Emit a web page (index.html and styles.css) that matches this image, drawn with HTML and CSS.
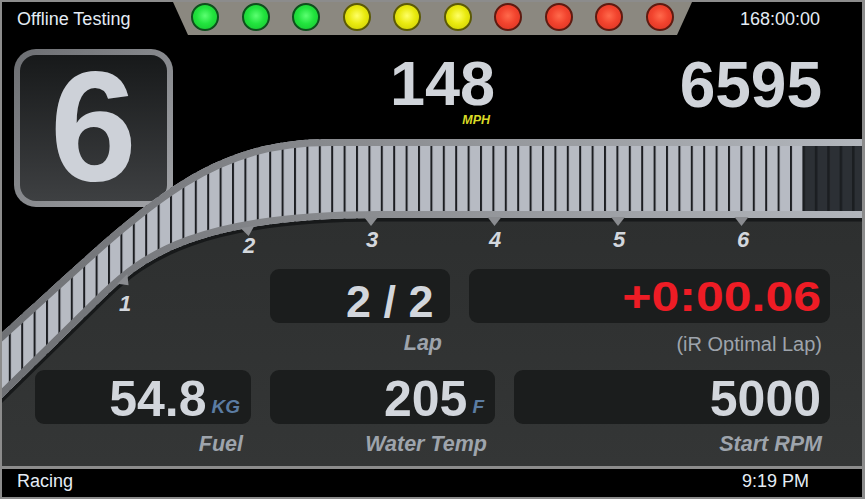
FILE: index.html
```html
<!DOCTYPE html>
<html lang="en">
<head>
    <meta charset="UTF-8">
    <meta name="viewport" content="width=device-width, initial-scale=1.0">
    <title>Dash - Offline Testing</title>
    <link rel="stylesheet" href="styles.css">
</head>
<body>
    <div class="dash">
        <div class="topbar">
            <div class="tb-left">Offline Testing</div>
            <div class="leds">
                <span class="led led-green"></span>
                <span class="led led-green"></span>
                <span class="led led-green"></span>
                <span class="led led-yellow"></span>
                <span class="led led-yellow"></span>
                <span class="led led-yellow"></span>
                <span class="led led-red"></span>
                <span class="led led-red"></span>
                <span class="led led-red"></span>
                <span class="led led-red"></span>
            </div>
            <div class="tb-right">168:00:00</div>
        </div>

        <div class="main">
            <!-- rpm arc, drawn in page coordinates -->
            <svg class="gauge" width="860" height="430" viewBox="2 36 860 430">
                <defs>
                    <linearGradient id="rim" gradientUnits="userSpaceOnUse" x1="0" y1="0" x2="862" y2="0">
                        <stop offset="0" stop-color="#6e7074"/>
                        <stop offset="0.45" stop-color="#8c8e92"/>
                        <stop offset="1" stop-color="#b2b6bc"/>
                    </linearGradient>
                    <linearGradient id="panel" gradientUnits="userSpaceOnUse" x1="0" y1="140" x2="0" y2="466">
                        <stop offset="0" stop-color="#2b2d2d"/>
                        <stop offset="1" stop-color="#343636"/>
                    </linearGradient>
                    <pattern id="seg-on" patternUnits="userSpaceOnUse" x="8.8" y="0" width="12.4" height="20">
                        <rect width="12.4" height="20" fill="#b7bbc3"/>
                        <rect width="2" height="20" fill="#1c1e22"/>
                    </pattern>
                    <pattern id="seg-off" patternUnits="userSpaceOnUse" x="8.8" y="0" width="12.4" height="20">
                        <rect width="12.4" height="20" fill="#2c3035"/>
                        <rect width="2.6" height="20" fill="#1b1e21"/>
                    </pattern>
                    <clipPath id="band-clip">
                        <path d="M-20,352 L0,334 C140,208 200,139 330,139 L880,139 L880,218 L380,218 C200,218 145,258 105,297 L0,400 L-20,419 Z"/>
                    </clipPath>
                </defs>
                <path d="M-20,419 L0,400 L105,297 C145,258 200,218 380,218 L880,218 L880,480 L-20,480 Z" fill="url(#panel)"/>
                <path d="M-20,419 L0,400 L105,297 C145,258 200,218 380,218 L880,218" fill="none" stroke="#17191a" stroke-width="7"/>
                <g clip-path="url(#band-clip)">
                    <rect x="-20" y="130" width="900" height="300" fill="url(#seg-on)"/>
                    <rect x="803.4" y="130" width="80" height="100" fill="url(#seg-off)"/>
                    <path d="M-20,352 L0,334 C140,208 200,139 330,139 L880,139 L880,218 L380,218 C200,218 145,258 105,297 L0,400 L-20,419 Z" fill="none" stroke="url(#rim)" stroke-width="14"/>
                </g>
                <polygon class="tick" points="-7,-1 7,-1 0,8" transform="translate(123,279.5) rotate(-44)"/>
                <polygon class="tick" points="-7,-1 7,-1 0,8" transform="translate(247.5,228) rotate(-8)"/>
                <polygon class="tick" points="-7,-1 7,-1 0,8" transform="translate(371,218)"/>
                <polygon class="tick" points="-7,-1 7,-1 0,8" transform="translate(494.5,218)"/>
                <polygon class="tick" points="-7,-1 7,-1 0,8" transform="translate(618,218)"/>
                <polygon class="tick" points="-7,-1 7,-1 0,8" transform="translate(741.5,218)"/>
                <text class="tick-num" x="125" y="311">1</text>
                <text class="tick-num" x="249" y="253">2</text>
                <text class="tick-num" x="372" y="247">3</text>
                <text class="tick-num" x="495" y="247">4</text>
                <text class="tick-num" x="619" y="247">5</text>
                <text class="tick-num" x="743" y="247">6</text>
            </svg>

            <div class="top-row">
                <div class="gear"><div class="gear-face">6</div></div>
                <div class="speed">
                    <div class="speed-val">148</div>
                    <div class="speed-unit">MPH</div>
                </div>
                <div class="rpm">6595</div>
            </div>

            <div class="rows">
                <div class="row row-1">
                    <div class="cell cell-lap">
                        <div class="box box-lap">2 / 2</div>
                        <div class="label">Lap</div>
                    </div>
                    <div class="cell cell-delta">
                        <div class="box box-delta"><span class="delta">+0:00.06</span></div>
                        <div class="label label-plain">(iR Optimal Lap)</div>
                    </div>
                </div>
                <div class="row row-2">
                    <div class="cell cell-fuel">
                        <div class="box box-unit">54.8<span class="unit">KG</span></div>
                        <div class="label">Fuel</div>
                    </div>
                    <div class="cell cell-water">
                        <div class="box box-unit">205<span class="unit">F</span></div>
                        <div class="label">Water Temp</div>
                    </div>
                    <div class="cell cell-start">
                        <div class="box">5000</div>
                        <div class="label">Start RPM</div>
                    </div>
                </div>
            </div>
        </div>

        <div class="sep"></div>
        <div class="botbar">
            <span>Racing</span>
            <span>9:19 PM</span>
        </div>
    </div>
</body>
</html>
```

FILE: styles.css
```css
body {
    margin: 0;
    padding: 0;
    overflow: hidden;
    background-color: #000;
    font-family: 'Liberation Sans', Arial, sans-serif;
}
.dash {
    width: 865px;
    height: 499px;
    box-sizing: border-box;
    border: 2px solid #8c8c8c;
    border-right-width: 3px;
    background-color: #000;
    display: flex;
    flex-direction: column;
}

/* top bar */
.topbar {
    height: 34px;
    display: flex;
    color: #e4ecf5;
    font-size: 18px;
    line-height: 35px;
}
.tb-left {
    width: 171px;
    box-sizing: border-box;
    padding-left: 15px;
}
.tb-right {
    flex: 1;
    text-align: right;
    padding-right: 42px;
}
.leds {
    width: 519px;
    height: 33px;
    box-sizing: border-box;
    padding-top: 1px;
    background-color: #8b8880;
    clip-path: polygon(0 0, 100% 0, calc(100% - 15px) 100%, 15px 100%);
    display: flex;
    justify-content: center;
    align-items: flex-start;
    gap: 22.5px;
}
.led {
    width: 28px;
    height: 28px;
    box-sizing: border-box;
    border-radius: 50%;
    border: 2px solid;
}
.led-green {
    border-color: #0e4f1c;
    background: radial-gradient(circle at 50% 45%, #5cff72 0%, #22e43e 45%, #15bf2e 100%);
}
.led-yellow {
    border-color: #5c5a06;
    background: radial-gradient(circle at 50% 45%, #ffff66 0%, #eaea10 45%, #c9c900 100%);
}
.led-red {
    border-color: #5e1a10;
    background: radial-gradient(circle at 50% 45%, #ff6a4c 0%, #f2442e 45%, #d63222 100%);
}

/* main area */
.main {
    position: relative;
    height: 430px;
    isolation: isolate;
}
.gauge {
    position: absolute;
    left: 0;
    top: 0;
    z-index: 1;
}
.tick {
    fill: #8a8c90;
}
.tick-num {
    font: italic bold 22px 'Liberation Sans', Arial, sans-serif;
    fill: #d3d7dd;
    text-anchor: middle;
}
.top-row {
    display: flex;
    align-items: flex-start;
    padding: 13px 40px 0 12px;
}
.gear {
    position: relative;
    z-index: 0;
    width: 159px;
    height: 158px;
    box-sizing: border-box;
    padding: 6px;
    border-radius: 22px;
    background: linear-gradient(135deg, #6c6e72, #a2a4a8);
}
.gear-face {
    height: 100%;
    border-radius: 16px;
    background: linear-gradient(#17191a, #3e4042);
    color: #cdd1d8;
    font-size: 156px;
    font-weight: bold;
    line-height: 142px;
    text-align: center;
}
.speed {
    position: relative;
    z-index: 2;
    margin-left: 217px;
    margin-top: 5px;
    display: flex;
    flex-direction: column;
    align-items: flex-end;
}
.speed-val {
    color: #d0d4da;
    font-size: 63px;
    font-weight: bold;
    line-height: 59px;
}
.speed-unit {
    padding-right: 5px;
    color: #dada26;
    font-size: 12.5px;
    font-style: italic;
    font-weight: bold;
    line-height: 14px;
}
.rpm {
    position: relative;
    z-index: 2;
    margin-left: auto;
    margin-top: 4px;
    color: #d0d4da;
    font-size: 64px;
    font-weight: bold;
    line-height: 64px;
}

/* data boxes */
.rows {
    position: relative;
    z-index: 2;
    margin-top: 62px;
}
.row {
    display: flex;
    gap: 19px;
}
.row-1 {
    margin-left: 268px;
}
.row-2 {
    margin-left: 33px;
    margin-top: 14px;
}
.cell-lap { width: 180px; }
.cell-delta { width: 361px; }
.cell-fuel { width: 216px; }
.cell-water { width: 225px; }
.cell-start { width: 316px; }
.box {
    height: 54px;
    box-sizing: border-box;
    padding: 5px 9px 0 0;
    border-radius: 9px;
    background-color: #1b1d1d;
    color: #d2d6dc;
    font-size: 50px;
    font-weight: bold;
    line-height: 49px;
    text-align: right;
    white-space: nowrap;
}
.box-lap {
    padding-top: 11px;
    padding-right: 16.5px;
    font-size: 45px;
    line-height: 43px;
}
.box-unit {
    padding-right: 11px;
}
.delta {
    display: block;
    color: #ee1c25;
    transform: scaleY(0.85);
    transform-origin: 100% 15px;
}
.unit {
    margin-left: 5px;
    color: #5b7ca2;
    font-size: 19px;
    font-style: italic;
    line-height: 1;
    vertical-align: 3px;
}
.label {
    margin-top: 8px;
    padding-right: 8px;
    color: #9ea4ac;
    font-size: 21.5px;
    font-style: italic;
    font-weight: bold;
    line-height: 24px;
    text-align: right;
}
.label-plain {
    margin-top: 9px;
    font-size: 20px;
    font-style: normal;
    font-weight: normal;
}

/* bottom bar */
.sep {
    height: 3px;
    background-color: #8c8c8c;
}
.botbar {
    height: 28px;
    display: flex;
    justify-content: space-between;
    padding: 0 53px 0 15px;
    color: #e4ecf5;
    font-size: 18px;
    line-height: 25px;
}
```
